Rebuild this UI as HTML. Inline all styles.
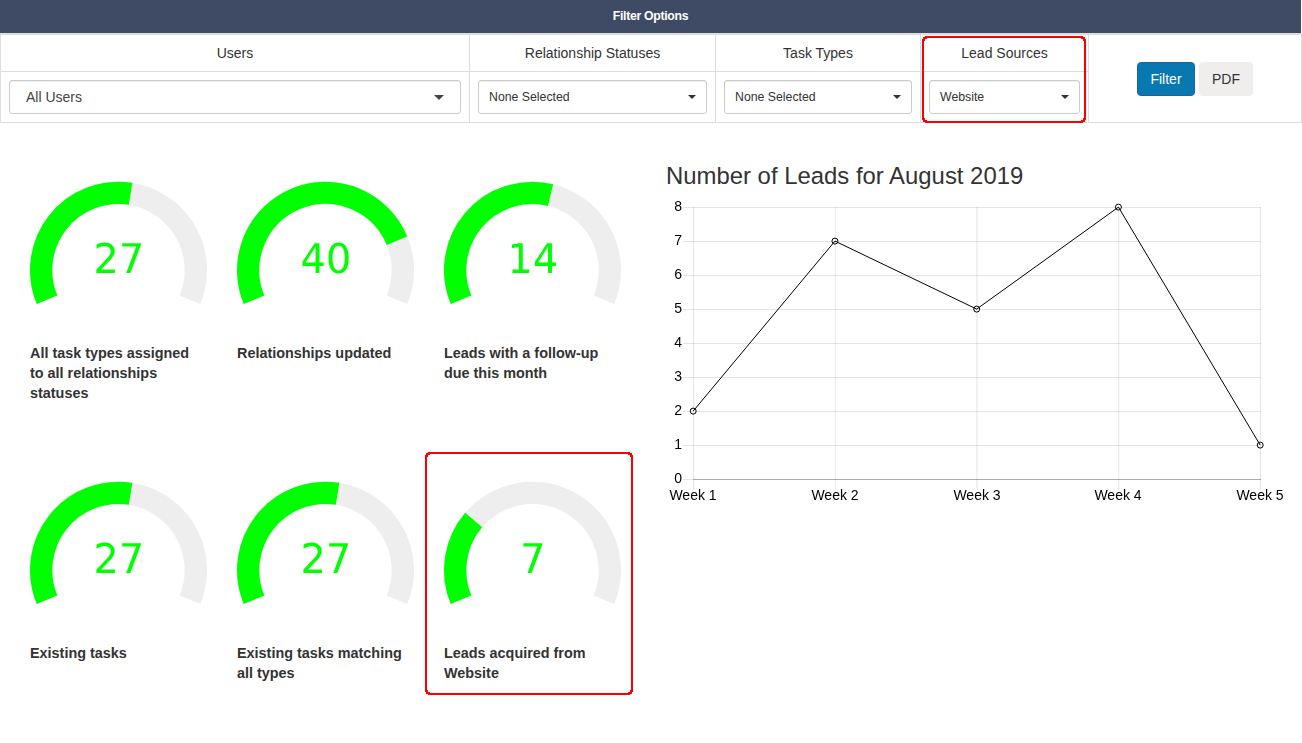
<!DOCTYPE html>
<html><head><meta charset="utf-8">
<style>
*{box-sizing:border-box}
html,body{margin:0;padding:0;background:#fff}
body{width:1302px;height:743px;position:relative;overflow:hidden;font-family:"Liberation Sans",sans-serif;color:#333}
.a{position:absolute}
.hdr{left:0;top:0;width:1301px;height:33px;background:#3f4b65;color:#fff;font-weight:bold;font-size:12.3px;letter-spacing:-0.33px;line-height:16px;text-align:center;padding-top:8px}
.bl{position:absolute;background:#dddddd}
.th{position:absolute;top:43px;font-size:14px;line-height:20px;text-align:center;color:#333}
.sel{position:absolute;top:80px;height:34px;border:1px solid #ccc;border-radius:3px;background:#fff;box-shadow:inset 0 1px 1px rgba(0,0,0,.075)}
.sel .t{position:absolute;left:10px;top:0;line-height:32px;font-size:12.3px;color:#333}
.car{position:absolute;width:0;height:0;border-top:4px solid #333;border-left:4px solid transparent;border-right:4px solid transparent}
.btn{position:absolute;top:62px;height:34px;border-radius:4px;font-size:14px;line-height:34px;text-align:center}
.red{position:absolute;border:2px solid #ff0000;border-radius:4px}
.lbl{position:absolute;width:200px;white-space:nowrap;font-weight:bold;font-size:14.4px;line-height:20px;color:#333}
.yl{will-change:transform;position:absolute;left:640.4px;letter-spacing:0;width:42px;text-align:right;font-size:14px;line-height:18px;color:#000}
.xl{will-change:transform;position:absolute;top:486px;width:80px;text-align:center;font-size:14px;line-height:18px;color:#000}
.title{position:absolute;left:666px;top:161px;font-size:23.9px;line-height:30px;color:#333;white-space:nowrap}
</style></head><body>
<div class="a hdr">Filter Options</div>
<div class="bl" style="left:0;top:33px;width:1302px;height:2px"></div>
<div class="bl" style="left:0;top:122px;width:1302px;height:1px"></div>
<div class="bl" style="left:0;top:33px;width:1px;height:90px"></div>
<div class="bl" style="left:1301px;top:33px;width:1px;height:90px"></div>
<div class="bl" style="left:0;top:71px;width:1088px;height:1px"></div>
<div class="bl" style="left:469px;top:33px;width:1px;height:90px"></div>
<div class="bl" style="left:715px;top:33px;width:1px;height:90px"></div>
<div class="bl" style="left:920px;top:33px;width:1px;height:90px"></div>
<div class="bl" style="left:1088px;top:33px;width:1px;height:90px"></div>
<div class="th" style="left:1px;width:468px">Users</div>
<div class="th" style="left:470px;width:245px">Relationship Statuses</div>
<div class="th" style="left:716px;width:204px">Task Types</div>
<div class="th" style="left:921px;width:167px">Lead Sources</div>

<div class="sel" style="left:9px;width:452px"><span class="t" style="left:16px;font-size:14px;color:#444">All Users</span>
<div class="car" style="left:424px;top:14px;border-top-width:5px;border-left-width:5px;border-right-width:5px;border-top-color:#444"></div></div>
<div class="sel" style="left:478px;width:229px"><span class="t">None Selected</span><div class="car" style="left:209px;top:14px"></div></div>
<div class="sel" style="left:724px;width:188px"><span class="t">None Selected</span><div class="car" style="left:168px;top:14px"></div></div>
<div class="sel" style="left:929px;width:151px"><span class="t">Website</span><div class="car" style="left:131px;top:14px"></div></div>

<div class="btn" style="left:1137px;width:58px;background:#0779b0;border:1px solid #1a64a0;line-height:32px;color:#fff">Filter</div>
<div class="btn" style="left:1199px;width:54px;background:#efeeed;color:#333">PDF</div>



<svg class="a" style="left:0;top:0" width="1302" height="743" viewBox="0 0 1302 743"><path d="M47.038,299.851 A77.350,77.350 0 1 1 189.962,299.851" stroke="#eeeeee" stroke-width="22.3" fill="none"/><path d="M47.038,299.851 A77.350,77.350 0 0 1 130.600,193.852" stroke="#00ff00" stroke-width="22.3" fill="none"/><path transform="translate(93.451,273.000) scale(0.019531,-0.020000)" d="M393 170H1098V0H150V170Q265 289 463.5 489.5Q662 690 713 748Q810 857 848.5 932.5Q887 1008 887 1081Q887 1200 803.5 1275.0Q720 1350 586 1350Q491 1350 385.5 1317.0Q280 1284 160 1217V1421Q282 1470 388.0 1495.0Q494 1520 582 1520Q814 1520 952.0 1404.0Q1090 1288 1090 1094Q1090 1002 1055.5 919.5Q1021 837 930 725Q905 696 771.0 557.5Q637 419 393 170Z" fill="#00ff00"/><path transform="translate(118.900,273.000) scale(0.019531,-0.020000)" d="M168 1493H1128V1407L586 0H375L885 1323H168Z" fill="#00ff00"/><path d="M254.038,299.851 A77.350,77.350 0 1 1 396.962,299.851" stroke="#eeeeee" stroke-width="22.3" fill="none"/><path d="M254.038,299.851 A77.350,77.350 0 0 1 396.962,240.649" stroke="#00ff00" stroke-width="22.3" fill="none"/><path transform="translate(300.451,273.000) scale(0.019531,-0.020000)" d="M774 1317 264 520H774ZM721 1493H975V520H1188V352H975V0H774V352H100V547Z" fill="#00ff00"/><path transform="translate(325.900,273.000) scale(0.019531,-0.020000)" d="M651 1360Q495 1360 416.5 1206.5Q338 1053 338 745Q338 438 416.5 284.5Q495 131 651 131Q808 131 886.5 284.5Q965 438 965 745Q965 1053 886.5 1206.5Q808 1360 651 1360ZM651 1520Q902 1520 1034.5 1321.5Q1167 1123 1167 745Q1167 368 1034.5 169.5Q902 -29 651 -29Q400 -29 267.5 169.5Q135 368 135 745Q135 1123 267.5 1321.5Q400 1520 651 1520Z" fill="#00ff00"/><path d="M461.038,299.851 A77.350,77.350 0 1 1 603.962,299.851" stroke="#eeeeee" stroke-width="22.3" fill="none"/><path d="M461.038,299.851 A77.350,77.350 0 0 1 550.557,195.037" stroke="#00ff00" stroke-width="22.3" fill="none"/><path transform="translate(507.451,273.000) scale(0.019531,-0.020000)" d="M254 170H584V1309L225 1237V1421L582 1493H784V170H1114V0H254Z" fill="#00ff00"/><path transform="translate(532.900,273.000) scale(0.019531,-0.020000)" d="M774 1317 264 520H774ZM721 1493H975V520H1188V352H975V0H774V352H100V547Z" fill="#00ff00"/><path d="M47.038,599.851 A77.350,77.350 0 1 1 189.962,599.851" stroke="#eeeeee" stroke-width="22.3" fill="none"/><path d="M47.038,599.851 A77.350,77.350 0 0 1 130.600,493.852" stroke="#00ff00" stroke-width="22.3" fill="none"/><path transform="translate(93.451,573.000) scale(0.019531,-0.020000)" d="M393 170H1098V0H150V170Q265 289 463.5 489.5Q662 690 713 748Q810 857 848.5 932.5Q887 1008 887 1081Q887 1200 803.5 1275.0Q720 1350 586 1350Q491 1350 385.5 1317.0Q280 1284 160 1217V1421Q282 1470 388.0 1495.0Q494 1520 582 1520Q814 1520 952.0 1404.0Q1090 1288 1090 1094Q1090 1002 1055.5 919.5Q1021 837 930 725Q905 696 771.0 557.5Q637 419 393 170Z" fill="#00ff00"/><path transform="translate(118.900,573.000) scale(0.019531,-0.020000)" d="M168 1493H1128V1407L586 0H375L885 1323H168Z" fill="#00ff00"/><path d="M254.038,599.851 A77.350,77.350 0 1 1 396.962,599.851" stroke="#eeeeee" stroke-width="22.3" fill="none"/><path d="M254.038,599.851 A77.350,77.350 0 0 1 337.600,493.852" stroke="#00ff00" stroke-width="22.3" fill="none"/><path transform="translate(300.451,573.000) scale(0.019531,-0.020000)" d="M393 170H1098V0H150V170Q265 289 463.5 489.5Q662 690 713 748Q810 857 848.5 932.5Q887 1008 887 1081Q887 1200 803.5 1275.0Q720 1350 586 1350Q491 1350 385.5 1317.0Q280 1284 160 1217V1421Q282 1470 388.0 1495.0Q494 1520 582 1520Q814 1520 952.0 1404.0Q1090 1288 1090 1094Q1090 1002 1055.5 919.5Q1021 837 930 725Q905 696 771.0 557.5Q637 419 393 170Z" fill="#00ff00"/><path transform="translate(325.900,573.000) scale(0.019531,-0.020000)" d="M168 1493H1128V1407L586 0H375L885 1323H168Z" fill="#00ff00"/><path d="M461.038,599.851 A77.350,77.350 0 1 1 603.962,599.851" stroke="#eeeeee" stroke-width="22.3" fill="none"/><path d="M461.038,599.851 A77.350,77.350 0 0 1 473.683,520.015" stroke="#00ff00" stroke-width="22.3" fill="none"/><path transform="translate(520.175,573.000) scale(0.019531,-0.020000)" d="M168 1493H1128V1407L586 0H375L885 1323H168Z" fill="#00ff00"/><line x1="683" y1="479.5" x2="1261" y2="479.5" stroke="rgba(0,0,0,0.1)" stroke-width="1"/><line x1="683" y1="445.5" x2="1261" y2="445.5" stroke="rgba(0,0,0,0.1)" stroke-width="1"/><line x1="683" y1="411.5" x2="1261" y2="411.5" stroke="rgba(0,0,0,0.1)" stroke-width="1"/><line x1="683" y1="377.5" x2="1261" y2="377.5" stroke="rgba(0,0,0,0.1)" stroke-width="1"/><line x1="683" y1="343.5" x2="1261" y2="343.5" stroke="rgba(0,0,0,0.1)" stroke-width="1"/><line x1="683" y1="309.5" x2="1261" y2="309.5" stroke="rgba(0,0,0,0.1)" stroke-width="1"/><line x1="683" y1="275.5" x2="1261" y2="275.5" stroke="rgba(0,0,0,0.1)" stroke-width="1"/><line x1="683" y1="241.5" x2="1261" y2="241.5" stroke="rgba(0,0,0,0.1)" stroke-width="1"/><line x1="683" y1="207.5" x2="1261" y2="207.5" stroke="rgba(0,0,0,0.1)" stroke-width="1"/><line x1="693.5" y1="207" x2="693.5" y2="490" stroke="rgba(0,0,0,0.1)" stroke-width="1"/><line x1="835.25" y1="207" x2="835.25" y2="490" stroke="rgba(0,0,0,0.1)" stroke-width="1"/><line x1="977.0" y1="207" x2="977.0" y2="490" stroke="rgba(0,0,0,0.1)" stroke-width="1"/><line x1="1118.75" y1="207" x2="1118.75" y2="490" stroke="rgba(0,0,0,0.1)" stroke-width="1"/><line x1="1260.5" y1="207" x2="1260.5" y2="490" stroke="rgba(0,0,0,0.1)" stroke-width="1"/><line x1="693" y1="479.5" x2="1261" y2="479.5" stroke="rgba(0,0,0,0.25)" stroke-width="1"/><polyline points="693.2,411.1 834.95,241.1 976.7,309.1 1118.45,207.1 1260.2,445.1" fill="none" stroke="#000" stroke-width="1"/><circle cx="693.2" cy="411.1" r="3" fill="none" stroke="#000" stroke-width="1"/><circle cx="834.95" cy="241.1" r="3" fill="none" stroke="#000" stroke-width="1"/><circle cx="976.7" cy="309.1" r="3" fill="none" stroke="#000" stroke-width="1"/><circle cx="1118.45" cy="207.1" r="3" fill="none" stroke="#000" stroke-width="1"/><circle cx="1260.2" cy="445.1" r="3" fill="none" stroke="#000" stroke-width="1"/><g fill="#ff0000" shape-rendering="crispEdges"><rect x="925" y="36" width="158" height="1"/><rect x="923" y="37" width="162" height="1"/><rect x="923" y="38" width="4" height="1"/><rect x="1081" y="38" width="4" height="1"/><rect x="922" y="39" width="3" height="2"/><rect x="1083" y="39" width="3" height="2"/><rect x="922" y="41" width="2" height="77"/><rect x="1084" y="41" width="2" height="77"/><rect x="922" y="118" width="3" height="2"/><rect x="1083" y="118" width="3" height="2"/><rect x="923" y="120" width="4" height="1"/><rect x="1081" y="120" width="4" height="1"/><rect x="923" y="121" width="162" height="1"/><rect x="925" y="122" width="158" height="1"/></g><g fill="#ff0000" shape-rendering="crispEdges"><rect x="428" y="452" width="202" height="1"/><rect x="426" y="453" width="206" height="1"/><rect x="426" y="454" width="4" height="1"/><rect x="628" y="454" width="4" height="1"/><rect x="425" y="455" width="3" height="2"/><rect x="630" y="455" width="3" height="2"/><rect x="425" y="457" width="2" height="233"/><rect x="631" y="457" width="2" height="233"/><rect x="425" y="690" width="3" height="2"/><rect x="630" y="690" width="3" height="2"/><rect x="426" y="692" width="4" height="1"/><rect x="628" y="692" width="4" height="1"/><rect x="426" y="693" width="206" height="1"/><rect x="428" y="694" width="202" height="1"/></g></svg>

<div class="lbl" style="left:30px;top:343px">All task types assigned<br>to all relationships<br>statuses</div>
<div class="lbl" style="left:237px;top:343px">Relationships updated</div>
<div class="lbl" style="left:444px;top:343px">Leads with a follow-up<br>due this month</div>
<div class="lbl" style="left:30px;top:643px">Existing tasks</div>
<div class="lbl" style="left:237px;top:643px">Existing tasks matching<br>all types</div>
<div class="lbl" style="left:444px;top:643px">Leads acquired from<br>Website</div>



<div class="title">Number of Leads for August 2019</div>
<div class="yl" style="top:468.5px">0</div><div class="yl" style="top:434.5px">1</div><div class="yl" style="top:400.5px">2</div><div class="yl" style="top:366.5px">3</div><div class="yl" style="top:332.5px">4</div><div class="yl" style="top:298.5px">5</div><div class="yl" style="top:264.5px">6</div><div class="yl" style="top:230.5px">7</div><div class="yl" style="top:196.5px">8</div>
<div class="xl" style="left:653.20px">Week 1</div><div class="xl" style="left:794.95px">Week 2</div><div class="xl" style="left:936.70px">Week 3</div><div class="xl" style="left:1078.45px">Week 4</div><div class="xl" style="left:1220.20px">Week 5</div>
</body></html>
